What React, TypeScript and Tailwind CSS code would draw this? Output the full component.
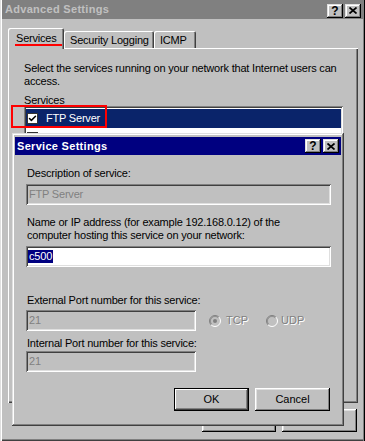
import { Check } from 'lucide-react';

const font = "font-['Liberation_Sans',Arial,sans-serif]";

function CaptionButton({ kind }: { kind: 'help' | 'close' }) {
  return (
    <div className="w-[16px] h-[14px] bg-[#c0c0c0] flex items-center justify-center shadow-[inset_-1px_-1px_0_#000,inset_1px_1px_0_#dfdfdf,inset_-2px_-2px_0_#808080,inset_2px_2px_0_#fff]">
      {kind === 'help' ? (
        <span className="text-[12px] font-bold leading-none text-black">?</span>
      ) : (
        <svg width="8" height="7" viewBox="0 0 8 7">
          <path d="M0.5 0.5 L7.5 6.5 M7.5 0.5 L0.5 6.5" stroke="#000" strokeWidth="1.7" />
        </svg>
      )}
    </div>
  );
}

function Radio({ checked }: { checked?: boolean }) {
  return (
    <svg width="12" height="12" viewBox="0 0 12 12">
      <circle cx="6" cy="6" r="5" fill="#c0c0c0" />
      <path d="M2.11 9.89 A5.5 5.5 0 0 1 9.89 2.11" stroke="#808080" fill="none" />
      <path d="M9.89 2.11 A5.5 5.5 0 0 1 2.11 9.89" stroke="#fff" fill="none" />
      <path d="M2.8 9.2 A4.5 4.5 0 0 1 9.2 2.8" stroke="#404040" fill="none" strokeOpacity="0.35" />
      {checked && <circle cx="6" cy="6" r="2" fill="#808080" />}
    </svg>
  );
}

function Field({ value, wide, disabled, selected }: { value: string; wide?: boolean; disabled?: boolean; selected?: boolean }) {
  return (
    <div
      className={
        (wide ? 'w-[305px] ' : 'w-[170px] ') +
        (disabled ? 'bg-[#c0c0c0] text-[#808080] ' : 'bg-white text-black ') +
        'h-[21px] flex items-center pl-[2px] shadow-[inset_1px_1px_0_#808080,inset_-1px_-1px_0_#fff,inset_2px_2px_0_#404040,inset_-2px_-2px_0_#dfdfdf]'
      }
    >
      {selected ? (
        <span className="bg-[#000080] text-white leading-[13px] px-[1px] tracking-[-0.2px]">{value}</span>
      ) : (
        <span className="leading-[13px] pl-[1px] tracking-[-0.2px]">{value}</span>
      )}
    </div>
  );
}

function Button({ label, isDefault, w }: { label: string; isDefault?: boolean; w: string }) {
  return (
    <div
      className={
        w +
        ' h-[23px] flex items-center justify-center bg-[#c0c0c0] ' +
        (isDefault
          ? 'border border-black shadow-[inset_-1px_-1px_0_#404040,inset_1px_1px_0_#fff,inset_-2px_-2px_0_#808080]'
          : 'shadow-[inset_-1px_-1px_0_#000,inset_1px_1px_0_#fff,inset_-2px_-2px_0_#808080,inset_2px_2px_0_#dfdfdf]')
      }
    >
      {label}
    </div>
  );
}

export default function App() {
  return (
    <div className={`relative w-[365px] h-[441px] overflow-hidden bg-[#c0c0c0] text-[11px] text-black ${font}`}>
      <div className="h-full flex flex-col shadow-[inset_1px_0_0_#dfdfdf,inset_2px_0_0_#fff,inset_-1px_0_0_#000,inset_-2px_0_0_#808080,inset_0_-1px_0_#404040,inset_0_-2px_0_#808080]">
        {/* title bar */}
        <div className="ml-[2px] mr-[2px] h-[19px] bg-[#808080] flex items-center justify-between pl-[3px] pr-[2px]">
          <span className="font-bold text-[#c0c0c0] tracking-[0.3px] leading-[13px]">Advanced Settings</span>
          <div className="flex gap-[2px] mt-[2px]">
            <CaptionButton kind="help" />
            <CaptionButton kind="close" />
          </div>
        </div>

        <div className="mt-[9px] pl-[8px] pr-[7px] flex flex-col">
          {/* tabs */}
          <div className="relative z-10 flex items-end h-[20px]">
            <div className="relative h-[21px] -mb-px w-[56px] pl-[8px] pt-[4px] bg-[#c0c0c0] rounded-t-[2px] shadow-[inset_1px_1px_0_#fff,inset_-1px_0_0_#404040,inset_-2px_0_0_#808080]">
              <span className="leading-[13px] tracking-[-0.2px] block">Services</span>
              <div className="absolute left-[7px] top-[16px] w-[47px] h-[2px] bg-[#f00]" />
            </div>
            <div className="h-[17px] w-[90px] pl-[6px] pt-[3px] rounded-t-[2px] shadow-[inset_1px_1px_0_#fff,inset_-1px_0_0_#404040,inset_-2px_0_0_#808080]">
              <span className="leading-[13px] tracking-[-0.2px] block whitespace-nowrap">Security Logging</span>
            </div>
            <div className="h-[17px] w-[42px] pl-[6px] pt-[3px] rounded-t-[2px] shadow-[inset_1px_1px_0_#fff,inset_-1px_0_0_#404040,inset_-2px_0_0_#808080]">
              <span className="leading-[13px] tracking-[-0.2px] block">ICMP</span>
            </div>
          </div>

          {/* panel */}
          <div className="relative h-[355px] pt-[14px] pl-[16px] shadow-[inset_1px_1px_0_#fff,inset_-1px_-1px_0_#404040,inset_-2px_-2px_0_#808080]">
            <p className="leading-[13px] tracking-[-0.2px] whitespace-nowrap">
              Select the services running on your network that Internet users can
              <br />
              access.
            </p>
            <p className="mt-[7px] leading-[11px] tracking-[-0.2px]">Services</p>
            <div className="relative w-[319px] h-[180px] bg-white pt-[3px] px-[2px] shadow-[inset_1px_1px_0_#808080,inset_-1px_-1px_0_#fff,inset_2px_2px_0_#404040,inset_-2px_-2px_0_#dfdfdf]">
              <div className="h-[19px] bg-[#0a246a] flex items-center pl-[1px] gap-[8px]">
                <div className="w-[11px] h-[11px] bg-white border border-[#333] flex items-center justify-center">
                  <Check size={9} strokeWidth={4} color="#000" />
                </div>
                <span className="text-white leading-[13px] tracking-[-0.2px]">FTP Server</span>
              </div>
              <div className="h-[19px] flex items-center pl-[1px] gap-[8px]">
                <div className="w-[11px] h-[11px] bg-white border border-[#333]" />
                <span className="leading-[13px] tracking-[-0.2px] whitespace-nowrap">
                  Internet Mail Access Protocol Version 3 (IMAP3)
                </span>
              </div>
              <div className="absolute left-[-13px] top-[-1px] w-[96px] h-[23px] border-2 border-[#f00]" />
            </div>
          </div>

          {/* main dialog buttons */}
          <div className="mt-[6px] mr-[1px] flex justify-end gap-[6px]">
            <Button label="OK" w="w-[74px]" />
            <Button label="Cancel" w="w-[75px]" />
          </div>
        </div>
      </div>

      {/* Service Settings dialog */}
      <div className="absolute left-[12px] top-[133px] z-30 w-[332px] h-[293px] bg-[#c0c0c0] flex flex-col pt-[4px] px-[3px] shadow-[inset_-1px_-1px_0_#404040,inset_1px_1px_0_#dfdfdf,inset_-2px_-2px_0_#808080,inset_2px_2px_0_#fff]">
        <div className="h-[18px] bg-[#000080] flex items-center justify-between pl-[2px] pr-[2px]">
          <span className="font-bold text-white tracking-[0.3px] leading-[13px]">Service Settings</span>
          <div className="flex gap-[2px]">
            <CaptionButton kind="help" />
            <CaptionButton kind="close" />
          </div>
        </div>

        <div className="px-[11px] flex flex-col">
          <p className="mt-[12px] pl-[1px] leading-[13px] tracking-[-0.2px]">Description of service:</p>
          <div className="mt-[4px]">
            <Field value="FTP Server" wide disabled />
          </div>

          <p className="mt-[11px] pl-[1px] leading-[13px] tracking-[-0.2px] whitespace-nowrap">
            Name or IP address (for example 192.168.0.12) of the
            <br />
            computer hosting this service on your network:
          </p>
          <div className="mt-[4px]">
            <Field value="c500" wide selected />
          </div>

          <p className="mt-[27px] pl-[1px] leading-[13px] tracking-[-0.2px]">External Port number for this service:</p>
          <div className="mt-[3px] flex items-center">
            <Field value="21" disabled />
            <div className="ml-[13px] flex items-center gap-[5px]">
              <Radio checked />
              <span className="text-[#808080] [text-shadow:1px_1px_0_#fff] leading-[13px]">TCP</span>
            </div>
            <div className="ml-[18px] flex items-center gap-[3px]">
              <Radio />
              <span className="text-[#808080] [text-shadow:1px_1px_0_#fff] leading-[13px]">UDP</span>
            </div>
          </div>

          <p className="mt-[6px] pl-[1px] leading-[13px] tracking-[-0.2px]">Internal Port number for this service:</p>
          <div className="mt-[1px]">
            <Field value="21" disabled />
          </div>

          <div className="mt-[16px] flex justify-end gap-[6px]">
            <Button label="OK" isDefault w="w-[75px]" />
            <Button label="Cancel" w="w-[75px]" />
          </div>
        </div>
      </div>
    </div>
  );
}
